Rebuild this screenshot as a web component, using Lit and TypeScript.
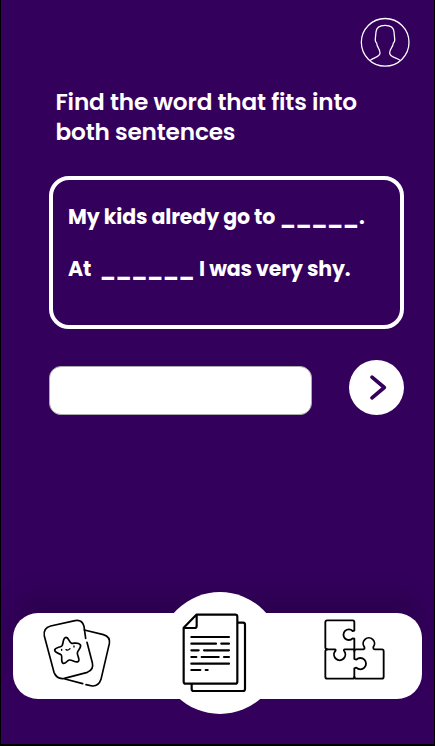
import { LitElement, html, css } from "lit";
import { customElement } from "lit/decorators.js";

@customElement("app-root")
export class AppRoot extends LitElement {
  static styles = css`
    :host {
      display: flex;
      flex-direction: column;
      box-sizing: border-box;
      width: 435px;
      height: 746px;
      overflow: hidden;
      background: #33005c;
      border: solid #000;
      border-width: 0 1px 2px 1px;
      color: #fff;
      font-family: Poppins, Inter, sans-serif;
    }
    svg { display: block; fill: none; stroke-linecap: round; stroke-linejoin: round; }
    .top { display: flex; justify-content: flex-end; padding: 10px 14px 0 0; }
    .avatar { width: 70px; height: 65px; stroke: #fff; }
    h1 {
      margin: 12px 0 0 54.5px;
      font-size: 23.2px;
      letter-spacing: -0.17px;
      line-height: 30px;
      font-weight: 600;
      white-space: nowrap;
    }
    h1 span { display: block; }
    .card {
      box-sizing: border-box;
      width: 355px;
      height: 153px;
      margin: 29px 0 0 48px;
      border: 4.5px solid #fff;
      border-radius: 20px;
      padding: 21.5px 0 0 15px;
      font-size: 20.5px;
      letter-spacing: -0.13px;
      font-weight: 700;
      line-height: 30px;
    }
    .row { display: flex; white-space: pre; margin-bottom: 22px; }
    .go { width: 212px; }
    .at { width: 32px; }
    .gap5 { width: 79px; font-size: 20px; letter-spacing: 0.15px; }
    .gap6 { width: 99px; font-size: 20px; letter-spacing: 0.15px; }
    .answer { display: flex; align-items: center; margin: 30px 0 0 48px; height: 56px; }
    input {
      box-sizing: border-box;
      width: 263px;
      height: 49px;
      margin: 6px 36.5px 0 0;
      border: 1.5px solid #aaa;
      border-radius: 12px;
      background: #fff;
      padding: 0 12px;
      font: 500 20px Poppins, Inter, sans-serif;
      outline: none;
    }
    button { border: 0; padding: 0; background: #fff; cursor: pointer; }
    .next { width: 55px; height: 55px; border-radius: 50%; }
    .next svg { width: 55px; height: 55px; stroke: #33005c; stroke-width: 3.7; }
    nav {
      display: flex;
      align-items: center;
      justify-content: space-between;
      box-sizing: border-box;
      width: 409px;
      height: 85.5px;
      margin: auto 0 45.5px 12px;
      padding: 0 27px 0 22px;
      border-radius: 25px;
      background: #fff;
      box-shadow: 0 -20px 25px rgba(0, 0, 0, 0.14);
    }
    nav svg { stroke: #000; }
    .cards { width: 85px; height: 85px; margin-top: -5px; }
    .docs { flex: none; width: 122px; height: 122px; border-radius: 50%; margin: -6px 0 0 4px; }
    .docs svg { width: 122px; height: 122px; }
    .puzzle { width: 80px; height: 80px; margin-top: -12px; }
  `;

  render() {
    return html`
      <div class="top">
        <svg class="avatar" viewBox="0 0 210 195" stroke-width="3.8">
          <circle cx="105.5" cy="97" r="71.5" />
          <path d="M62 150C75 141 90 141 90 129C90 115 81 114 80 99Q75 97 76 86L78 66Q80 46 105 46Q131 46 132 66L134 86Q135 97 130 99C129 113 119 115 119 129C119 141 136 142 149 150" />
        </svg>
      </div>
      <h1><span>Find the word that fits into</span><span>both sentences</span></h1>
      <section class="card">
        <div class="row"><span class="go">My kids alredy go to</span><span class="gap5">_____</span><span>.</span></div>
        <div class="row"><span class="at">At</span><span class="gap6">______</span><span class="shy">I was very shy.</span></div>
      </section>
      <div class="answer">
        <input type="text" />
        <button class="next">
          <svg viewBox="0 0 55 55"><path d="M23 17.2L35.3 27.5L23 37.8" /></svg>
        </button>
      </div>
      <nav>
        <svg class="cards" viewBox="0 0 255 255" stroke-width="5">
          <path d="M152 82L147 46Q141 25 120 29L47 45Q24 51 28 75L57 184Q66 206 88 202L157 184Q177 176 172 155L156 94" />
          <path d="M148 57L205 71Q227 78 223 98L198 205Q191 226 172 225L153 221M143 218L90 204" />
          <path d="M93 79C102 79 102 95 110 97C120 97 130 93 136 101C141 111 126 118 127 126C127 136 137 146 129 152C121 156 112 146 103 147C96 148 92 160 84 157C76 152 83 140 79 132C74 126 59 127 59 117C61 108 76 110 81 104C86 97 83 80 93 79Z" />
          <path d="M80 115V118M117 105V108M93 116Q99 120 105 113" stroke-width="4" />
        </svg>
        <button class="docs">
          <svg viewBox="-3 20 366 366" stroke-width="6.5">
            <path d="M109 88H226Q232 88 232 94V289Q232 295 226 295H77Q71 295 71 289V127ZM110 90V122Q110 128 104 128H72M232 112H249Q255 112 255 118V311Q255 317 249 317H101Q95 317 95 311V297" />
            <path d="M94 155H207M94 175H168M184 175H207M94 195H116M132 195H207M94 215H109M125 215H176M192 215H207M94 235H207M94 254H121M137 254H143" />
          </svg>
        </button>
        <svg class="puzzle" viewBox="0 0 240 240" stroke-width="5.5">
          <path d="M118 118V86L113 85A16 16 0 1 1 113 63L118 62V36Q118 31 113 31H37Q31 31 31 37V112Q31 118 37 118H60Q64 119 60 124A17 17 0 1 0 88 124Q85 119 89 118H118" />
          <path d="M37 118Q31 119 31 124V200Q31 206 37 206H113Q118 206 118 200V175L124 173A17 17 0 1 0 124 149L118 147V118" />
          <path d="M118 124Q118 118 124 118H145Q150 117 148 111A17 17 0 1 1 175 111Q174 118 180 118H201Q206 118 206 124V200Q206 206 200 206H124Q118 206 118 200" />
        </svg>
      </nav>
    `;
  }
}
